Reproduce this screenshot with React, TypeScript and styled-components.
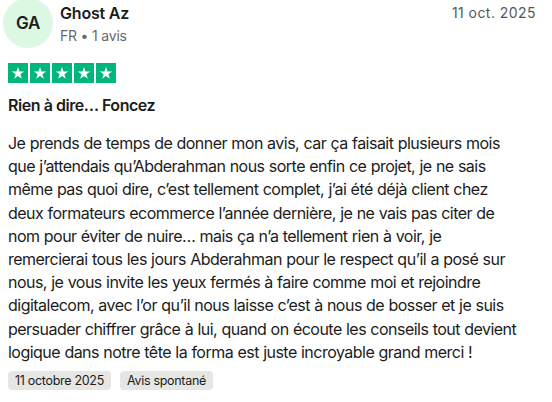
import React from "react";
import styled, { createGlobalStyle } from "styled-components";

const Global = createGlobalStyle`
  html, body { margin: 0; padding: 0; background: #ffffff; }
  body { font-family: Inter, "Noto Sans", Arial, sans-serif; color: #1c1c1c; }
`;

const Card = styled.article`
  width: 552px;
  height: 402px;
  box-sizing: border-box;
  padding: 0 16px 0 8px;
  overflow: hidden;
  display: flex;
  flex-direction: column;
`;

const Header = styled.header`
  display: flex;
  align-items: flex-start;
  margin-top: -2px;
`;

const Avatar = styled.div`
  width: 50px;
  height: 50px;
  margin-left: -5px;
  border-radius: 50%;
  background: #dcf8e3;
  display: flex;
  align-items: center;
  justify-content: center;
  font-size: 17px;
  font-weight: 600;
  letter-spacing: -0.3px;
  color: #1c1c1c;
  flex-shrink: 0;
`;

const Identity = styled.div`
  display: flex;
  flex-direction: column;
  margin-left: 7px;
  flex: 1;
`;

const Name = styled.span`
  font-size: 16px;
  font-weight: 600;
  line-height: 24px;
  letter-spacing: -0.2px;
  margin-top: 3px;
`;

const Meta = styled.span`
  font-size: 14px;
  line-height: 20px;
  color: #696969;
  letter-spacing: -0.2px;
  margin-top: 1px;
`;

const DateText = styled.time`
  font-size: 14px;
  line-height: 24px;
  margin-top: 3px;
  letter-spacing: 0.45px;
  color: #575757;
`;

const Stars = styled.div`
  display: flex;
  gap: 2px;
  margin-top: 15px;
`;

const StarBox = styled.span`
  width: 20px;
  height: 20px;
  background: #00b67a;
  display: flex;
  align-items: center;
  justify-content: center;
`;

const Title = styled.h2`
  margin: 10px 0 0;
  font-size: 16px;
  font-weight: 600;
  line-height: 24px;
  letter-spacing: -0.45px;
`;

const Body = styled.p`
  margin: 15px 0 0;
  font-size: 16px;
  line-height: 23.2px;
  letter-spacing: -0.52px;
  word-spacing: 0.3px;
  white-space: nowrap;
  color: #1c1c1c;
`;

const Tags = styled.div`
  display: flex;
  gap: 9px;
  margin-top: 7px;
`;

const Tag = styled.span`
  font-size: 12.5px;
  line-height: 19px;
  padding: 0 7px;
  letter-spacing: -0.3px;
  border-radius: 4px;
  background: #e6e6e3;
  color: #1c1c1c;
`;

const Star = () => (
  <StarBox>
    <svg width="14" height="14" viewBox="0 0 24 24">
      <path
        fill="#ffffff"
        d="M12 1.8l2.6 7.6h8l-6.5 4.7 2.5 7.7L12 17.1l-6.6 4.7 2.5-7.7L1.4 9.4h8z"
      />
    </svg>
  </StarBox>
);

const lines = [
  "Je prends de temps de donner mon avis, car ça faisait plusieurs mois",
  "que j’attendais qu’Abderahman nous sorte enfin ce projet, je ne sais",
  "même pas quoi dire, c’est tellement complet, j’ai été déjà client chez",
  "deux formateurs ecommerce l’année dernière, je ne vais pas citer de",
  "nom pour éviter de nuire… mais ça n’a tellement rien à voir, je",
  "remercierai tous les jours Abderahman pour le respect qu’il a posé sur",
  "nous, je vous invite les yeux fermés à faire comme moi et rejoindre",
  "digitalecom, avec l’or qu’il nous laisse c’est à nous de bosser et je suis",
  "persuader chiffrer grâce à lui, quand on écoute les conseils tout devient",
  "logique dans notre tête la forma est juste incroyable grand merci !",
];

export default function App() {
  return (
    <>
      <Global />
      <Card>
        <Header>
          <Avatar>GA</Avatar>
          <Identity>
            <Name>Ghost Az</Name>
            <Meta>FR • 1 avis</Meta>
          </Identity>
          <DateText>11 oct. 2025</DateText>
        </Header>
        <Stars>
          {[0, 1, 2, 3, 4].map((i) => (
            <Star key={i} />
          ))}
        </Stars>
        <Title>Rien à dire… Foncez</Title>
        <Body>
          {lines.map((l, i) => (
            <React.Fragment key={i}>
              {l}
              {i < lines.length - 1 && <br />}
            </React.Fragment>
          ))}
        </Body>
        <Tags>
          <Tag>11 octobre 2025</Tag>
          <Tag>Avis spontané</Tag>
        </Tags>
      </Card>
    </>
  );
}
